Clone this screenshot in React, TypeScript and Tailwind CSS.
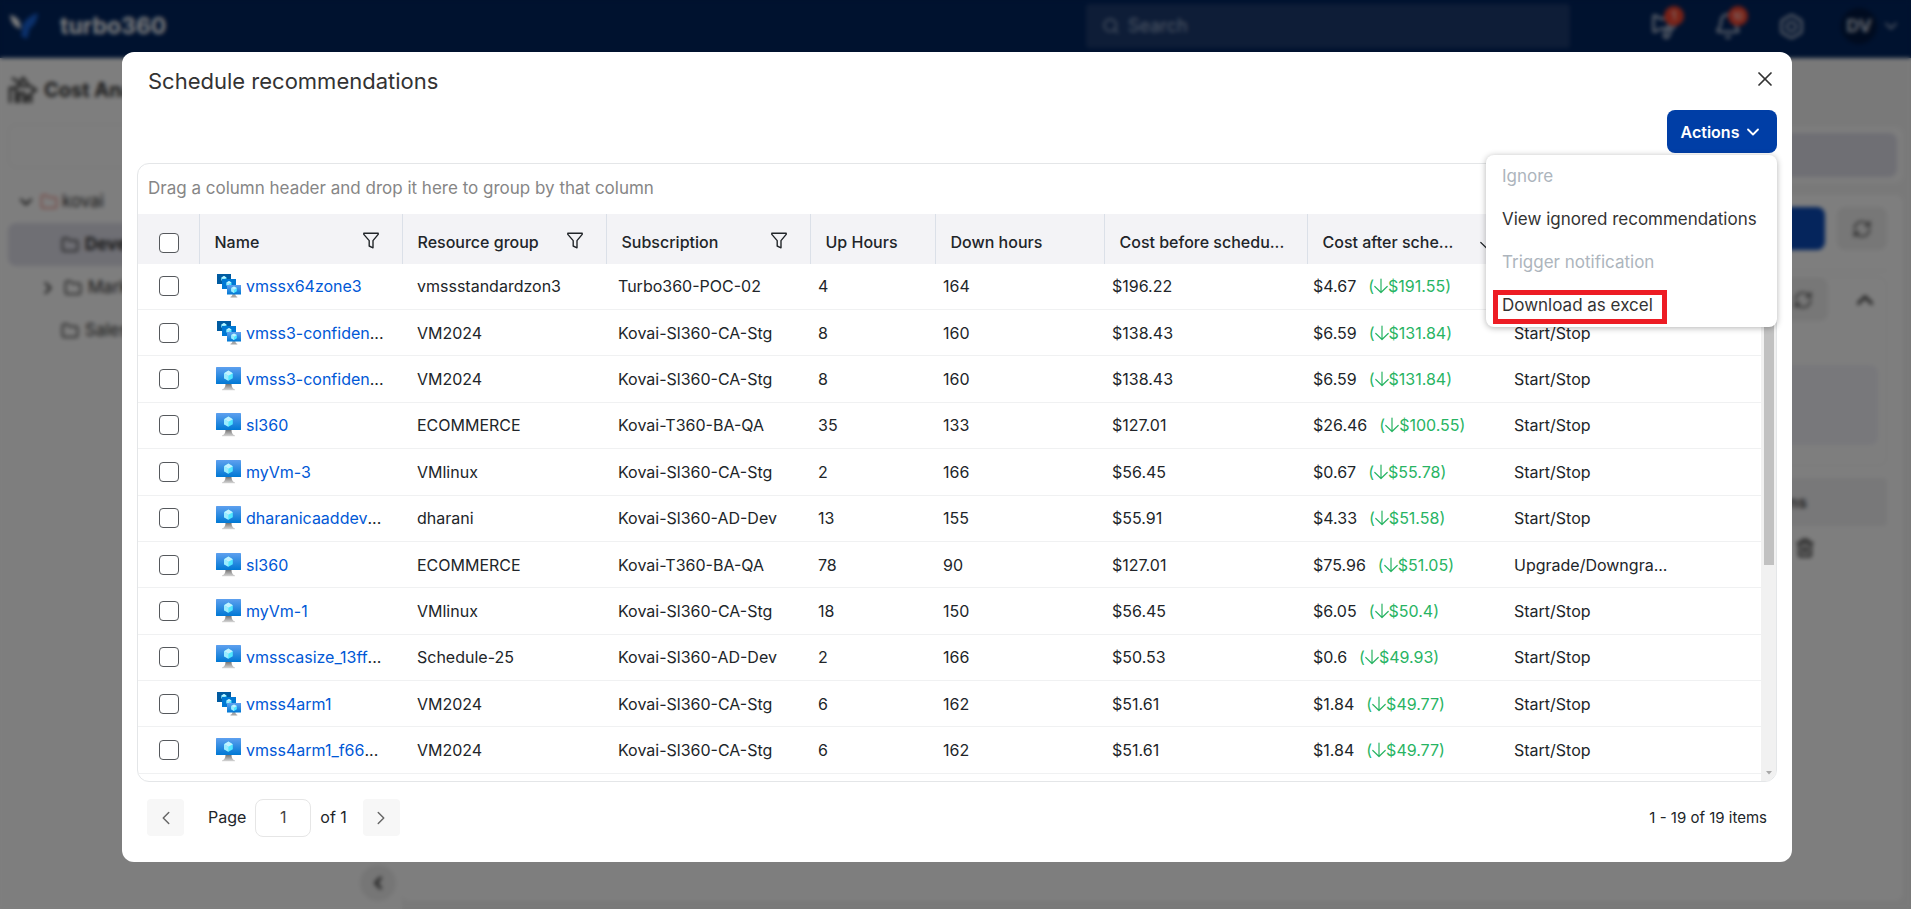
import { useState } from "react";
import {
  Bell,
  Bolt,
  ChevronDown,
  ChevronLeft,
  ChevronRight,
  ChevronUp,
  Folder,
  Megaphone,
  RefreshCw,
  Search,
  Trash2,
  X,
} from "lucide-react";

type Row = {
  kind: "vm" | "vmss";
  name: string;
  cut?: boolean;
  group: string;
  subscription: string;
  up: number;
  down: number;
  before: string;
  after: string;
  saving: string;
  type: string;
};

const rows: Row[] = [
  { kind: "vmss", name: "vmssx64zone3", group: "vmssstandardzon3", subscription: "Turbo360-POC-02", up: 4, down: 164, before: "$196.22", after: "$4.67", saving: "$191.55", type: "Start/Stop" },
  { kind: "vmss", name: "vmss3-confiden", cut: true, group: "VM2024", subscription: "Kovai-Sl360-CA-Stg", up: 8, down: 160, before: "$138.43", after: "$6.59", saving: "$131.84", type: "Start/Stop" },
  { kind: "vm", name: "vmss3-confiden", cut: true, group: "VM2024", subscription: "Kovai-Sl360-CA-Stg", up: 8, down: 160, before: "$138.43", after: "$6.59", saving: "$131.84", type: "Start/Stop" },
  { kind: "vm", name: "sl360", group: "ECOMMERCE", subscription: "Kovai-T360-BA-QA", up: 35, down: 133, before: "$127.01", after: "$26.46", saving: "$100.55", type: "Start/Stop" },
  { kind: "vm", name: "myVm-3", group: "VMlinux", subscription: "Kovai-Sl360-CA-Stg", up: 2, down: 166, before: "$56.45", after: "$0.67", saving: "$55.78", type: "Start/Stop" },
  { kind: "vm", name: "dharanicaaddev", cut: true, group: "dharani", subscription: "Kovai-Sl360-AD-Dev", up: 13, down: 155, before: "$55.91", after: "$4.33", saving: "$51.58", type: "Start/Stop" },
  { kind: "vm", name: "sl360", group: "ECOMMERCE", subscription: "Kovai-T360-BA-QA", up: 78, down: 90, before: "$127.01", after: "$75.96", saving: "$51.05", type: "Upgrade/Downgra..." },
  { kind: "vm", name: "myVm-1", group: "VMlinux", subscription: "Kovai-Sl360-CA-Stg", up: 18, down: 150, before: "$56.45", after: "$6.05", saving: "$50.4", type: "Start/Stop" },
  { kind: "vm", name: "vmsscasize_13ff", cut: true, group: "Schedule-25", subscription: "Kovai-Sl360-AD-Dev", up: 2, down: 166, before: "$50.53", after: "$0.6", saving: "$49.93", type: "Start/Stop" },
  { kind: "vmss", name: "vmss4arm1", group: "VM2024", subscription: "Kovai-Sl360-CA-Stg", up: 6, down: 162, before: "$51.61", after: "$1.84", saving: "$49.77", type: "Start/Stop" },
  { kind: "vm", name: "vmss4arm1_f66", cut: true, group: "VM2024", subscription: "Kovai-Sl360-CA-Stg", up: 6, down: 162, before: "$51.61", after: "$1.84", saving: "$49.77", type: "Start/Stop" },
];

const menuItems = [
  { label: "Ignore", disabled: true },
  { label: "View ignored recommendations" },
  { label: "Trigger notification", disabled: true },
  { label: "Download as excel", marked: true },
];

const checkbox =
  "block size-5 appearance-none rounded border border-[#55585c] bg-white checked:bg-[#003ea6]";

function FilterIcon() {
  return (
    <svg width="16" height="17" viewBox="0 0 16 17" fill="none" stroke="#212529" strokeWidth="1.4" strokeLinejoin="round">
      <path d="M.8 1.2h14.4v1.2L10 8.600v7.2L6.200 14V8.600L.8 2.400z" />
    </svg>
  );
}

function DownArrow() {
  return (
    <svg width="14" height="16" viewBox="0 0 14 16" fill="none" stroke="currentColor" strokeWidth="1.2" strokeLinecap="round" strokeLinejoin="round">
      <path d="M7 1v13.500M.8 8.500 7 14.500l6.200-6" />
    </svg>
  );
}

function CostIcon() {
  return (
    <svg width="30" height="28" viewBox="0 0 30 28" fill="none" stroke="currentColor" strokeWidth="2.4">
      <path d="M2 27V12h6v15M11 27V17h5v10M19 27v-7h4v7M4 2l8 5 3-5 5 6" />
      <path d="M8 10h14l6 4-6 4" />
    </svg>
  );
}

function Cube({ x, y, s }: { x: number; y: number; s: number }) {
  return (
    <g transform={`translate(${x} ${y}) scale(${s})`}>
      <path d="M4 0 8 2.300v4.600L4 9.200 0 6.900V2.300z" fill="#50e6ff" />
      <path d="M4 0 8 2.300 4 4.600 0 2.300z" fill="#c3f1ff" />
      <path d="M0 2.300 4 4.600v4.600L0 6.900z" fill="#9cebff" />
    </g>
  );
}

function VmIcon() {
  return (
    <svg width="25" height="24" viewBox="0 0 25 24">
      <defs>
        <linearGradient id="vm-screen" x1="0" y1="1" x2="0" y2="0">
          <stop offset="0" stopColor="#0078d4" />
          <stop offset="1" stopColor="#5ea0ef" />
        </linearGradient>
        <linearGradient id="vm-stand" x1="0" y1="0" x2="0" y2="1">
          <stop offset="0" stopColor="#767676" />
          <stop offset="1" stopColor="#d8d8d8" />
        </linearGradient>
      </defs>
      <path d="M9.500 17h6c.1 3 1 4.500 3.500 5.500v.8H6v-.8c2.500-1 3.400-2.500 3.500-5.500z" fill="url(#vm-stand)" />
      <rect width="25" height="17" rx=".6" fill="url(#vm-screen)" />
      <Cube x={8} y={3.6} s={1.1} />
    </svg>
  );
}

function ScaleSetIcon() {
  return (
    <svg width="25" height="24" viewBox="0 0 25 24">
      <rect x="1" width="14" height="10" fill="#005ba1" />
      <Cube x={5.5} y={2} s={0.62} />
      <rect x="6" y="5" width="14" height="10" fill="#0078d4" />
      <Cube x={10.5} y={7} s={0.62} />
      <path d="M16.500 20h2.800c0 1.600.8 2.400 2 2.800v.7h-6.800v-.7c1.200-.4 2-1.200 2-2.800z" fill="#a5a5a5" />
      <rect x="11" y="11" width="14" height="9.500" fill="url(#vm-screen)" />
      <Cube x={15.2} y={12.5} s={0.7} />
    </svg>
  );
}

function HeaderCell({ label, filter }: { label: string; filter?: boolean }) {
  return (
    <th scope="col" className="border-l border-[#dbe0e8] pl-[15px] pr-[23px] pt-1.5 text-left font-medium">
      <div className="flex items-center justify-between">
        <span className="whitespace-nowrap">{label}</span>
        {filter && (
          <button type="button" aria-label={`Filter ${label}`} className="pb-1">
            <FilterIcon />
          </button>
        )}
      </div>
    </th>
  );
}

/* App page that sits behind the dialog */
function Backdrop() {
  return (
    <div className="flex min-h-screen flex-col bg-white" aria-hidden="true">
      <header className="flex h-[58px] items-center bg-[#00245e] pb-1.5 pl-2.5 pr-2.5 text-white">
        <svg width="28" height="28" viewBox="0 0 28 28">
          <path d="M0 3c5 1 9 4 10 8l1 6C4 15 1 10 0 3z" fill="#fff" />
          <path d="M28 1c-1 8-4 13-8 15l-3 11-6-3 2-12C16 7 21 3 28 1z" fill="#1762d8" />
        </svg>
        <span className="ml-[22px] text-[23px] font-bold">turbo360</span>
        <div className="ml-auto flex h-11 w-[484px] items-center gap-2 rounded bg-[#1c3a6e] px-4 text-lg text-[#9fb0cc]">
          <Search size={18} />
          Search
        </div>
        <div className="ml-20 flex items-center gap-9 text-[#c5cede]">
          <span className="relative">
            <Megaphone size={28} className="-scale-x-100" />
            <span className="absolute -right-1.5 -top-1.5 size-5 rounded-full bg-[#f4442e] text-center text-xs leading-5 text-white">1</span>
          </span>
          <span className="relative">
            <Bell size={28} />
            <span className="absolute -right-1.5 -top-1.5 size-5 rounded-full bg-[#f4442e] text-center text-[10px] leading-5 text-white">10</span>
          </span>
          <Bolt size={27} />
          <span className="flex items-center gap-1">
            <span className="grid size-9 place-items-center rounded-full bg-[#00173f] text-lg font-bold">DV</span>
            <ChevronDown size={20} />
          </span>
        </div>
      </header>
      <div className="flex flex-1 bg-[#fdfdfd]">
        <aside className="relative w-[402px] px-2 pt-[18px] text-[17px] text-[#333]">
          <div className="flex items-center gap-1.5 text-xl font-bold">
            <CostIcon />
            Cost Ana
          </div>
          <div className="mt-5 h-11 rounded-lg border border-[#ececec]" />
          <div className="mt-3 flex h-[43px] items-center gap-1 pl-2">
            <ChevronDown size={20} strokeWidth={2.5} />
            <Folder size={18} className="text-[#f08a80]" />
            kovai
          </div>
          <div className="flex h-[43px] items-center gap-1.5 rounded-lg bg-[#dedee9] pl-[53px] font-bold">
            <Folder size={18} />
            Development
          </div>
          <div className="flex h-[43px] items-center gap-1.5 pl-[30px]">
            <ChevronRight size={20} strokeWidth={2.5} />
            <Folder size={18} />
            Marketing
          </div>
          <div className="flex h-[43px] items-center gap-1.5 pl-[53px]">
            <Folder size={18} />
            Sales
          </div>
          <span className="absolute bottom-2 right-1.5 grid size-9 place-items-center rounded-full bg-[#ececec]">
            <ChevronLeft size={20} strokeWidth={3} />
          </span>
        </aside>
        <main className="flex flex-1 flex-col bg-[#f3f3f3] pb-2 pr-2 pt-[69px] text-[#555]">
          <div className="rounded-lg bg-[#fbfbfb] p-1.5">
            <div className="h-11 rounded-lg bg-[#dedee9]" />
          </div>
          <div className="mt-3 flex-1 rounded-lg bg-[#fdfdfd] px-4 pt-3">
            <div className="flex justify-end gap-3">
              <span className="h-[43px] w-40 rounded-lg bg-[#0a4ab8]" />
              <span className="grid h-[43px] w-[50px] place-items-center rounded-lg bg-[#eeeeee]">
                <RefreshCw size={20} />
              </span>
            </div>
            <div className="mt-5 border-t border-[#ebebeb]" />
            <div className="mt-1.5 rounded-lg border border-[#f2f2f2] pb-5 pl-3 pr-2">
              <div className="flex items-center justify-end gap-6">
                <span className="grid h-[43px] w-[50px] place-items-center rounded-lg bg-[#eeeeee]">
                  <RefreshCw size={20} />
                </span>
                <ChevronUp size={26} strokeWidth={3} />
              </div>
              <div className="mt-11 h-20 rounded-lg bg-[#f0f0f7]" />
            </div>
            <div className="mt-3 flex h-12 items-center justify-end rounded bg-[#f0f0f2] pr-20 font-bold">Actions</div>
            <div className="mt-3 flex justify-end pr-[72px]">
              <Trash2 size={20} strokeWidth={3} />
            </div>
          </div>
        </main>
      </div>
    </div>
  );
}

export default function App() {
  const [page, setPage] = useState("1");

  return (
    <div className="font-['Inter',sans-serif] text-[#212529]">
      <Backdrop />

      <div className="fixed inset-0 flex bg-black/50 pb-[47px] pl-[122px] pr-[119px] pt-[52px] backdrop-blur-[2px]">
        <section role="dialog" aria-labelledby="dialog-title" className="flex min-w-0 flex-1 flex-col rounded-xl bg-white px-[15px]">
          <div className="flex h-[58px] items-center justify-between pl-[11px]">
            <h1 id="dialog-title" className="text-[22px] text-[#333]">Schedule recommendations</h1>
            <button type="button" aria-label="Close" className="mb-1 text-[#333]">
              <X size={24} strokeWidth={1.7} />
            </button>
          </div>

          <div className="relative flex justify-end">
            <button type="button" aria-haspopup="menu" aria-expanded="true" className="flex h-[43px] w-[110px] items-center justify-center gap-1 rounded-lg bg-[#003ea6] text-base font-semibold text-white">
              Actions
              <ChevronDown size={20} strokeWidth={2.2} />
            </button>
            <div role="menu" className="absolute right-0 top-[45px] z-10 flex w-[291px] flex-col rounded-lg bg-white shadow-[0_1px_6px_rgba(0,0,0,0.3)]">
              {menuItems.map((item) => (
                <button
                  key={item.label}
                  type="button"
                  role="menuitem"
                  disabled={item.disabled}
                  className="relative h-[43px] whitespace-nowrap pl-4 text-left text-[17px] text-[#333] disabled:text-[#adb5bd]"
                >
                  {item.label}
                  {item.marked && <span className="absolute left-[7px] top-[6px] h-[34px] w-[174px] border-[5px] border-[#ed1c24]" />}
                </button>
              ))}
            </div>
          </div>

          <div className="mt-2.5 flex min-h-0 flex-1 flex-col overflow-hidden rounded-xl border border-[#e4e6e8]">
            <p className="flex h-[50px] shrink-0 items-center pl-2.5 text-[17px] text-[#868686]">
              Drag a column header and drop it here to group by that column
            </p>
            <table className="w-full shrink-0 table-fixed bg-[#f3f3f6] text-base">
              <colgroup>
                <col className="w-[61px]" />
                <col className="w-[203px]" />
                <col className="w-[204px]" />
                <col className="w-[204px]" />
                <col className="w-[125px]" />
                <col className="w-[169px]" />
                <col className="w-[203px]" />
                <col className="w-[203px]" />
                <col />
              </colgroup>
              <thead>
                <tr className="h-[50px]">
                  <th scope="col" className="pl-[21px] pt-2">
                    <input type="checkbox" aria-label="Select all rows" className={checkbox} />
                  </th>
                  <HeaderCell label="Name" filter />
                  <HeaderCell label="Resource group" filter />
                  <HeaderCell label="Subscription" filter />
                  <HeaderCell label="Up Hours" />
                  <HeaderCell label="Down hours" />
                  <HeaderCell label="Cost before schedu..." />
                  <th scope="col" className="border-l border-[#dbe0e8] pl-[15px] pr-4 pt-1.5 text-left font-medium">
                    <div className="flex items-center justify-between whitespace-nowrap">
                      Cost after sche...
                      <DownArrow />
                    </div>
                  </th>
                  <HeaderCell label="Type" />
                </tr>
              </thead>
            </table>
            <div className="flex min-h-0 flex-1">
              <div className="min-w-0 flex-1 overflow-hidden">
                <table className="h-[510px] w-full table-fixed text-base">
                  <colgroup>
                    <col className="w-[61px]" />
                    <col className="w-[202px]" />
                    <col className="w-[201px]" />
                    <col className="w-[200px]" />
                    <col className="w-[125px]" />
                    <col className="w-[169px]" />
                    <col className="w-[201px]" />
                    <col className="w-[201px]" />
                    <col />
                  </colgroup>
                  <tbody>
                    {rows.map((r, i) => (
                      <tr key={i} className="border-b border-[#f0f1f2] whitespace-nowrap">
                        <td className="pl-[21px]">
                          <input type="checkbox" aria-label={`Select ${r.name}`} className={checkbox} />
                        </td>
                        <td className="pl-[17px]">
                          <div className="flex items-center">
                            {r.kind === "vm" ? <VmIcon /> : <ScaleSetIcon />}
                            <a href="#" className="ml-[5px] text-[#0058d6]">{r.name}</a>
                            {r.cut && "..."}
                          </div>
                        </td>
                        <td className="pl-4">{r.group}</td>
                        <td className="pl-4">{r.subscription}</td>
                        <td className="pl-4">{r.up}</td>
                        <td className="pl-4">{r.down}</td>
                        <td className="pl-4">{r.before}</td>
                        <td className="pl-4">
                          <div className="flex gap-3">
                            {r.after}
                            <span className="flex items-center text-[#28b463]">
                              (<DownArrow />{r.saving})
                            </span>
                          </div>
                        </td>
                        <td className="pl-4">{r.type}</td>
                      </tr>
                    ))}
                  </tbody>
                </table>
              </div>
              <div className="flex w-[15px] flex-col items-center justify-between bg-[#f1f1f1] pb-1.5">
                <div className="h-[301px] w-2.5 bg-[#c1c1c1]" />
                <svg width="6" height="4" viewBox="0 0 6 4">
                  <path d="M0 0h6L3 3.500z" fill="#a8a8a8" />
                </svg>
              </div>
            </div>
          </div>

          <div className="flex h-20 items-start pl-2.5 pr-2.5 pt-[17px] text-base">
            <button type="button" aria-label="Previous page" className="grid size-[37px] place-items-center rounded bg-[#f7f7f7] text-[#666]">
              <ChevronLeft size={22} strokeWidth={1.6} />
            </button>
            <label htmlFor="page" className="ml-6 leading-[37px]">Page</label>
            <input
              id="page"
              value={page}
              onChange={(e) => setPage(e.target.value)}
              className="ml-[9px] h-[38px] w-14 rounded-lg border border-[#e6e6e6] pb-0.5 text-center text-[#444]"
            />
            <span className="ml-[9px] leading-[37px]">of 1</span>
            <button type="button" aria-label="Next page" className="ml-4 grid size-[37px] place-items-center rounded bg-[#f7f7f7] text-[#666]">
              <ChevronRight size={22} strokeWidth={1.6} />
            </button>
            <span className="ml-auto text-[15px] leading-[37px]">1 - 19 of 19 items</span>
          </div>
        </section>
      </div>
    </div>
  );
}
